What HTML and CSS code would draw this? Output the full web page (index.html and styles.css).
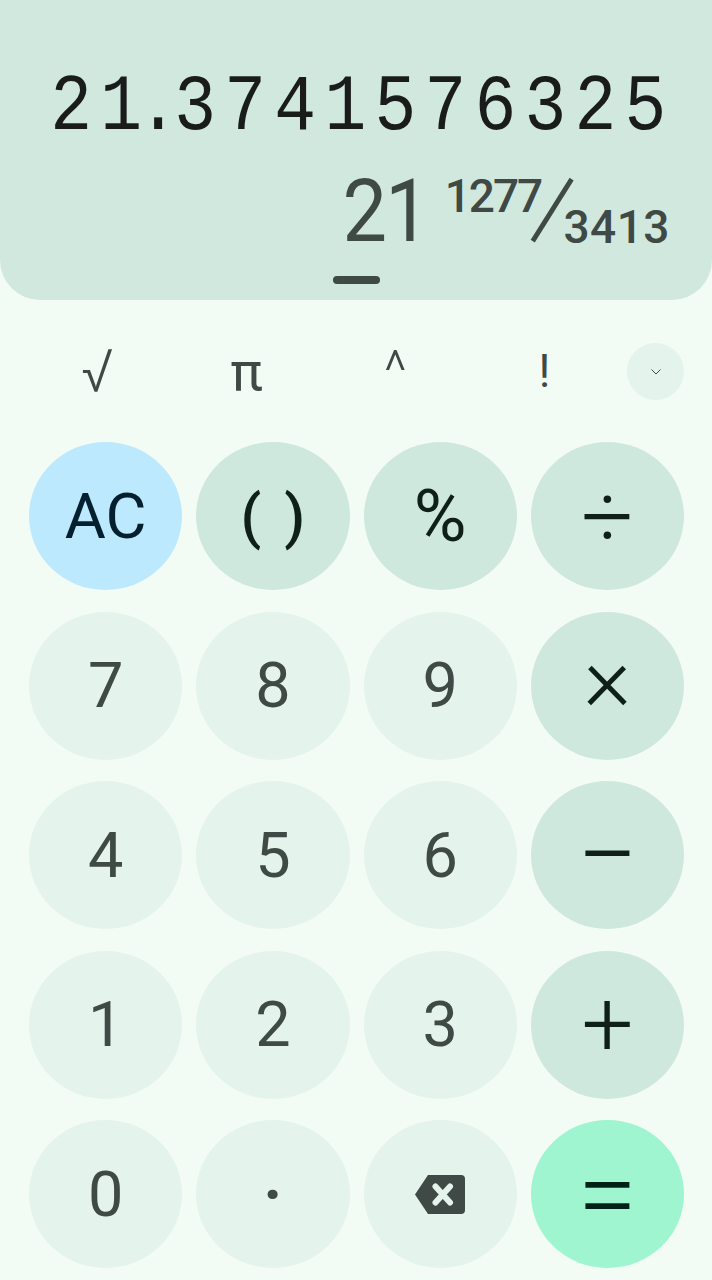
FILE: index.html
```html
<!DOCTYPE html>
<html lang="en">
<head>
    <meta charset="UTF-8">
    <meta name="viewport" content="width=device-width, initial-scale=1.0">
    <title>Calculator</title>
    <link rel="stylesheet" href="styles.css">
</head>
<body>
    <header class="display">
        <div class="result">2<span class="tight">1.</span>3741576325</div>
        <div class="fraction">
            <span class="whole">21</span>
            <span class="numerator">1277</span>
            <span class="slash">⁄</span>
            <span class="denominator">3413</span>
        </div>
        <div class="handle"></div>
    </header>

    <div class="functions">
        <button class="fn fn-root">√</button>
        <button class="fn fn-pi">π</button>
        <button class="fn fn-caret">^</button>
        <button class="fn">!</button>
        <button class="toggle">
            <svg width="12" height="8" viewBox="0 0 12 8"><path d="M1.5 1.500 6 6l4.500-4.500" fill="none" stroke="#3f4945" stroke-width="1"/></svg>
        </button>
    </div>

    <div class="keys">
        <button class="key clear">AC</button>
        <button class="key op parens">( )</button>
        <button class="key op percent">%</button>
        <button class="key op symbol">÷</button>

        <button class="key">7</button>
        <button class="key">8</button>
        <button class="key">9</button>
        <button class="key op symbol times">×</button>

        <button class="key">4</button>
        <button class="key">5</button>
        <button class="key">6</button>
        <button class="key op symbol long">−</button>

        <button class="key">1</button>
        <button class="key">2</button>
        <button class="key">3</button>
        <button class="key op symbol">+</button>

        <button class="key">0</button>
        <button class="key dot">·</button>
        <button class="key">
            <svg width="50" height="39" viewBox="0 0 50 39"><path d="M13 0h33a4 4 0 0 1 4 4v31a4 4 0 0 1-4 4H13L0 19.500z" fill="#3f4945"/><path d="M20.500 11.500 35 27.500M35 11.500 20.500 27.500" stroke="#e4f3eb" stroke-width="6" stroke-linecap="round"/></svg>
        </button>
        <button class="key equals symbol long">=</button>
    </div>
</body>
</html>
```

FILE: styles.css
```css
body {
    margin: 0;
    height: 1280px;
    overflow: hidden;
    background-color: #f2fcf5;
    font-family: Roboto, "Noto Sans", sans-serif;
}

button {
    border: none;
    padding: 0;
    font-family: inherit;
    background: none;
}

.display {
    height: 300px;
    box-sizing: border-box;
    padding-top: 66px;
    display: flex;
    flex-direction: column;
    align-items: flex-end;
    background-color: #d1e8df;
    border-radius: 0 0 40px 40px;
}

.result {
    margin-right: 37px;
    font-family: "Liberation Mono", monospace;
    font-size: 80px;
    line-height: 84px;
    letter-spacing: 9.500px;
    color: #191c1b;
    transform: scaleX(0.87);
    transform-origin: right;
}

.tight {
    letter-spacing: -5.500px;
}

.fraction {
    height: 82px;
    margin-top: 20px;
    margin-right: 42px;
    display: flex;
    align-items: flex-end;
    color: #3f4945;
}

.whole {
    font-size: 88px;
    line-height: 82px;
    letter-spacing: -2px;
    margin-right: 17px;
    transform: scaleX(0.9);
    transform-origin: right;
}

.numerator {
    align-self: flex-start;
    margin-top: 3px;
    font-size: 46px;
    line-height: 46px;
    letter-spacing: -2px;
    font-weight: 500;
}

.slash {
    font-size: 112px;
    font-weight: 300;
    line-height: 82px;
    margin: 0 -14px;
}

.denominator {
    font-size: 46px;
    line-height: 50px;
    font-weight: 500;
    letter-spacing: 0.500px;
}

.handle {
    align-self: center;
    width: 47px;
    height: 8px;
    margin-top: 24px;
    border-radius: 4px;
    background-color: #3f4945;
}

.functions {
    height: 57px;
    margin-top: 43px;
    padding-left: 23px;
    display: flex;
    align-items: center;
}

.fn {
    width: 149px;
    font-size: 46px;
    line-height: 57px;
    color: #3f4945;
}

.fn-root {
    font-size: 60px;
    font-weight: 300;
}

.fn-pi {
    font-size: 54px;
}

.fn-caret {
    font-size: 56px;
    font-weight: 300;
}

.toggle {
    width: 57px;
    height: 57px;
    margin-left: 8px;
    display: flex;
    align-items: center;
    justify-content: center;
    border-radius: 50%;
    background-color: #e4f3eb;
}

.keys {
    margin-top: 42px;
    padding: 0 28px 0 29px;
    display: grid;
    grid-template-columns: repeat(4, 1fr);
    grid-auto-rows: 148px;
    column-gap: 14px;
    row-gap: 21.500px;
}

.key {
    display: flex;
    align-items: center;
    justify-content: center;
    border-radius: 50%;
    font-size: 63px;
    color: #3f4945;
    background-color: #e4f3eb;
}

.dot {
    font-weight: 700;
}

.op {
    color: #0f1f1a;
    background-color: #cfe8dd;
}

.clear {
    color: #04202e;
    background-color: #bde9ff;
}

.equals {
    color: #002116;
    background-color: #9ff5d0;
}

.symbol {
    font-size: 92px;
    font-weight: 300;
}

.times {
    padding-bottom: 15px;
}

.long {
    font-size: 108px;
}

.parens {
    font-size: 60px;
    word-spacing: 8px;
    font-weight: 500;
}

.percent {
    font-size: 72px;
}
```
